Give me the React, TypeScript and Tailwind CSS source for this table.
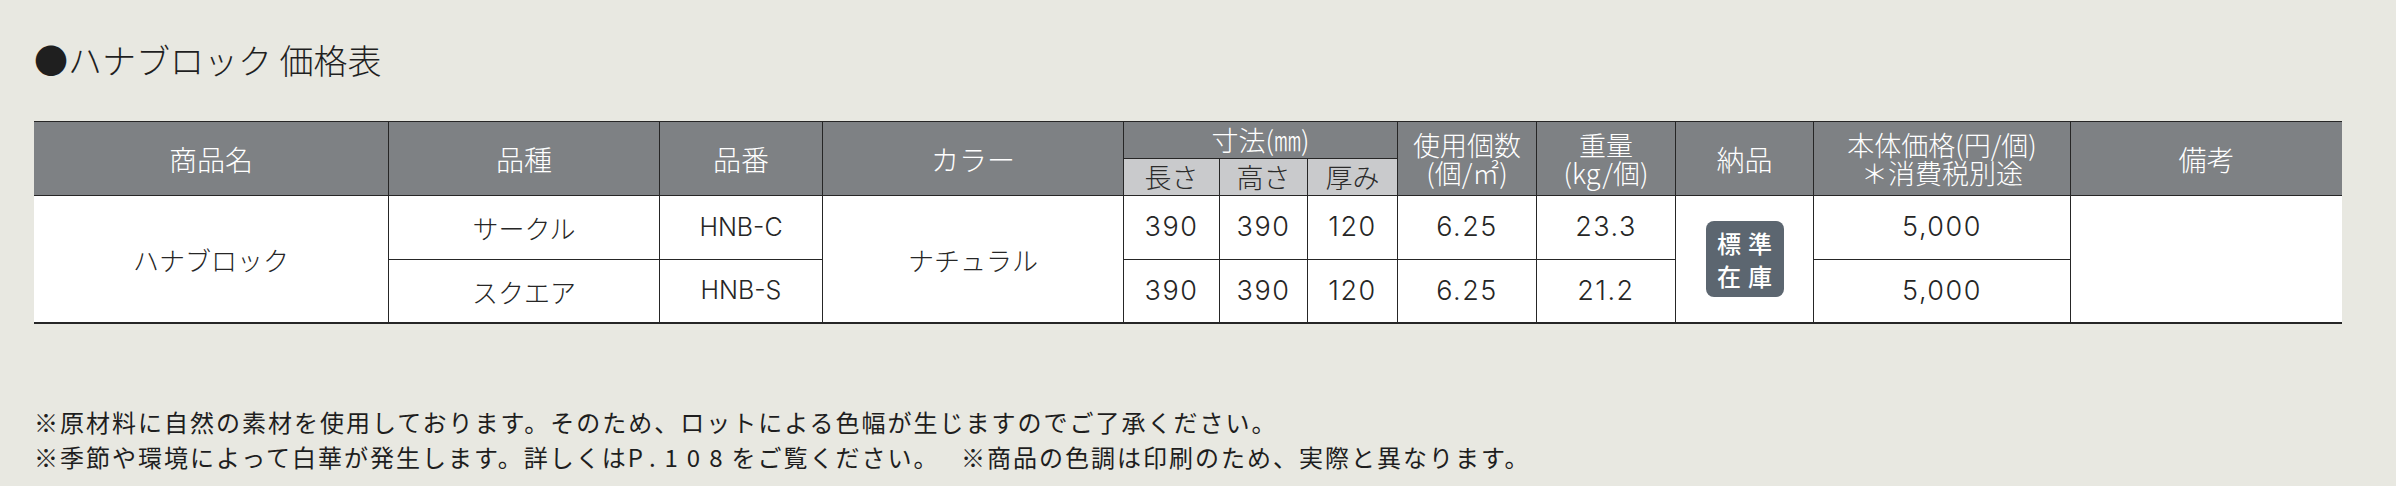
import React from "react";

const jp = "font-['Noto_Sans_CJK_JP',sans-serif]";
const num = "font-['Inter','Noto_Sans_CJK_JP',sans-serif]";

function C({
  pos,
  className = "",
  children,
}: {
  pos: string;
  className?: string;
  children?: React.ReactNode;
}) {
  return (
    <div
      className={`flex flex-col items-center justify-center text-center border-[#262626] ${pos} ${className}`}
    >
      {children}
    </div>
  );
}

const H = "bg-[#7e8184] text-white text-[28px] font-light leading-[28px] " + jp;
const H2 = "bg-[#7e8184] text-white text-[27px] font-light leading-[28px] " + jp;
const S = "bg-[#c9cacc] text-[#2b2b2b] text-[27px] font-light leading-[30px] " + jp;
const BJ = "bg-white text-[#262626] text-[26px] font-light " + jp;
const BN = "bg-white text-[#262626] text-[27px] font-light tracking-[1.5px] " + num;
const BL = "bg-white text-[#262626] text-[25px] font-light " + num;

export default function App() {
  return (
    <div className="w-[2396px] h-[486px] bg-[#e8e8e1] pl-[34px] pt-[40px] text-[#222]">
      <div className={`text-[34px] leading-[40px] font-light text-[#1f1f1f] ${jp}`}>●ハナブロック 価格表</div>

      <div className="mt-[41px] w-[2308px] border-t border-[#262626] grid grid-cols-[354px_271px_163px_301px_96px_88px_90px_139px_139px_138px_257px_272px] grid-rows-[37px_37px_64px_64px]">
        {/* header */}
        <C pos="col-start-1 row-start-1 row-span-2 border-b" className={H}>商品名</C>
        <C pos="col-start-2 row-start-1 row-span-2 border-b border-l" className={H}>品種</C>
        <C pos="col-start-3 row-start-1 row-span-2 border-b border-l" className={H}>品番</C>
        <C pos="col-start-4 row-start-1 row-span-2 border-b border-l" className={H}>カラー</C>
        <C pos="col-start-5 col-span-3 row-start-1 border-b border-l" className={H2}>寸法(㎜)</C>
        <C pos="col-start-5 row-start-2 border-b border-l" className={S}>長さ</C>
        <C pos="col-start-6 row-start-2 border-b border-l" className={S}>高さ</C>
        <C pos="col-start-7 row-start-2 border-b border-l" className={S}>厚み</C>
        <C pos="col-start-8 row-start-1 row-span-2 border-b border-l" className={H2}>
          <div>
            使用個数
            <br />
            (個/㎡)
          </div>
        </C>
        <C pos="col-start-9 row-start-1 row-span-2 border-b border-l" className={H2}>
          <div>
            重量
            <br />
            (kg/個)
          </div>
        </C>
        <C pos="col-start-10 row-start-1 row-span-2 border-b border-l" className={H}>納品</C>
        <C pos="col-start-11 row-start-1 row-span-2 border-b border-l" className={H2}>
          <div>
            本体価格(円/個)
            <br />
            ＊消費税別途
          </div>
        </C>
        <C pos="col-start-12 row-start-1 row-span-2 border-b border-l" className={H}>備考</C>

        {/* body */}
        <C pos="col-start-1 row-start-3 row-span-2 border-b-2" className={BJ}>ハナブロック</C>
        <C pos="col-start-2 row-start-3 border-b border-l" className={BJ}>サークル</C>
        <C pos="col-start-2 row-start-4 border-b-2 border-l" className={BJ}>スクエア</C>
        <C pos="col-start-3 row-start-3 border-b border-l" className={BL}>HNB-C</C>
        <C pos="col-start-3 row-start-4 border-b-2 border-l" className={BL}>HNB-S</C>
        <C pos="col-start-4 row-start-3 row-span-2 border-b-2 border-l" className={BJ}>ナチュラル</C>

        <C pos="col-start-5 row-start-3 border-b border-l" className={BN}>390</C>
        <C pos="col-start-6 row-start-3 border-b border-l" className={BN}>390</C>
        <C pos="col-start-7 row-start-3 border-b border-l" className={BN}>120</C>
        <C pos="col-start-8 row-start-3 border-b border-l" className={BN}>6.25</C>
        <C pos="col-start-9 row-start-3 border-b border-l" className={BN}>23.3</C>

        <C pos="col-start-5 row-start-4 border-b-2 border-l" className={BN}>390</C>
        <C pos="col-start-6 row-start-4 border-b-2 border-l" className={BN}>390</C>
        <C pos="col-start-7 row-start-4 border-b-2 border-l" className={BN}>120</C>
        <C pos="col-start-8 row-start-4 border-b-2 border-l" className={BN}>6.25</C>
        <C pos="col-start-9 row-start-4 border-b-2 border-l" className={BN}>21.2</C>

        <C pos="col-start-10 row-start-3 row-span-2 border-b-2 border-l" className="bg-white">
          <div className={`w-[78px] h-[76px] rounded-[8px] bg-[#5c6670] text-white text-[24px] leading-[33px] font-medium flex flex-col items-center justify-center ${jp}`}>
            <div className="flex gap-[7px]">
              <span>標</span>
              <span>準</span>
            </div>
            <div className="flex gap-[7px]">
              <span>在</span>
              <span>庫</span>
            </div>
          </div>
        </C>

        <C pos="col-start-11 row-start-3 border-b border-l" className={BN}>5,000</C>
        <C pos="col-start-11 row-start-4 border-b-2 border-l" className={BN}>5,000</C>
        <C pos="col-start-12 row-start-3 row-span-2 border-b-2 border-l" className="bg-white" />
      </div>

      <div className={`mt-[80px] text-[24px] leading-[35px] tracking-[2px] text-[#1e1e1e] ${jp}`}>
        <div>※原材料に自然の素材を使用しております。そのため、ロットによる色幅が生じますのでご了承ください。</div>
        <div>
          ※季節や環境によって白華が発生します。詳しくは<span className="tracking-[9px]">P.108</span>をご覧ください。　 ※商品の色調は印刷のため、実際と異なります。
        </div>
      </div>
    </div>
  );
}
